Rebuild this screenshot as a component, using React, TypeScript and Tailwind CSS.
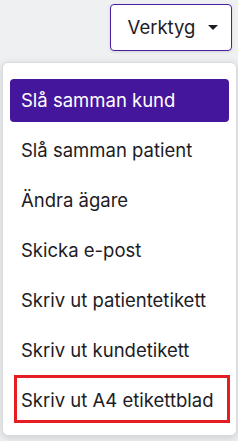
const items = [
  "Slå samman kund",
  "Slå samman patient",
  "Ändra ägare",
  "Skicka e-post",
  "Skriv ut patientetikett",
  "Skriv ut kundetikett",
  "Skriv ut A4 etikettblad",
];

export default function App() {
  return (
    <main
      className="relative h-[441px] w-[238px] overflow-hidden bg-[#eef0f2] text-[#1d1b24]"
      style={{ fontFamily: "Inter, 'Noto Sans', sans-serif" }}
    >
      <div className="flex justify-end pr-[6px] pt-[4px]">
        <button
          type="button"
          className="flex h-[47px] w-[122px] items-center justify-center gap-[13px] rounded-[4px] border border-[#4a1fa6] bg-white pl-[4px] text-[18.5px] shadow-[0_1px_3px_rgba(0,0,0,0.12)]"
        >
          Verktyg
          <span className="h-0 w-0 border-x-[5px] border-t-[5px] border-x-transparent border-t-[#1d1b24]" />
        </button>
      </div>

      <div className="ml-[2px] mr-[1px] mt-[11px] flex flex-col gap-[7px] rounded-[6px] border border-[#d9dadd] bg-white px-[7px] pb-[13px] pt-[16px] shadow-[0_2px_8px_rgba(0,0,0,0.15)]">
        {items.map((label, i) => (
          <div
            key={label}
            className={
              "relative flex h-[43px] items-center rounded-[4px] pl-[11px] text-[18.5px] " +
              (i === 0 ? "bg-[#44169b] text-white" : "")
            }
          >
            {label}
            {i === items.length - 1 && (
              <span className="pointer-events-none absolute -bottom-[1px] -right-[1px] -top-[4px] left-[4px] border-[3px] border-[#e41d22]" />
            )}
          </div>
        ))}
      </div>
    </main>
  );
}
